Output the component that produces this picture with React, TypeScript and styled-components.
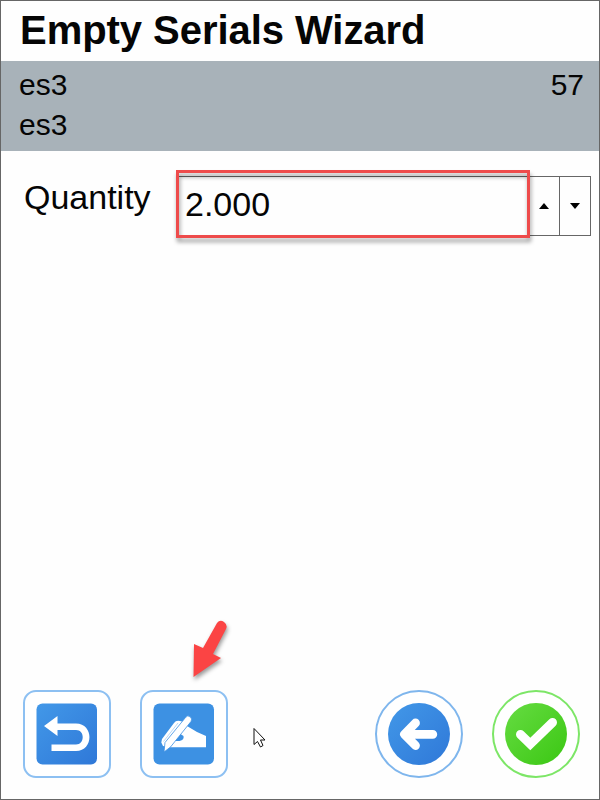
import React from "react";
import styled, { createGlobalStyle } from "styled-components";

const GlobalStyle = createGlobalStyle`
  * { box-sizing: border-box; }
  body { margin: 0; background: #fff; }
`;

const Screen = styled.main`
  position: relative;
  display: flex;
  flex-direction: column;
  width: 600px;
  height: 800px;
  overflow: hidden;
  border: 1px solid #666;
  background: #fefefe;
  color: #050505;
  font-family: "Liberation Sans", Arial, sans-serif;
`;

const Title = styled.h1`
  flex: none;
  height: 60px;
  margin: 0;
  padding-left: 19px;
  font-size: 40px;
  line-height: 58px;
  font-weight: 700;
  letter-spacing: -0.05px;
  white-space: nowrap;
`;

const Info = styled.section`
  flex: none;
  height: 90px;
  padding: 4px 15px 0 18px;
  background: #a8b2b9;
`;

const InfoLine = styled.div`
  display: flex;
  justify-content: space-between;
  height: 40px;
  font-size: 30px;
  line-height: 40px;
`;

const Field = styled.div`
  display: flex;
  flex: none;
  margin-top: 25px;
  padding: 0 8px 0 23px;
`;

const FieldName = styled.span`
  width: 152px;
  font-size: 34px;
  line-height: 42px;
`;

const Spinner = styled.div`
  position: relative;
  display: flex;
  flex: 1;
  height: 60px;
  border: 1px solid #666;
`;

const Value = styled.div`
  flex: 1;
  padding-left: 8px;
  font-size: 34px;
  line-height: 55px;
`;

const Step = styled.button<{ $divided?: boolean }>`
  display: flex;
  align-items: center;
  justify-content: center;
  width: 31px;
  padding: 0;
  border: 0;
  border-left: ${(p) => (p.$divided ? "1px solid #666" : "0")};
  background: none;
`;

const Highlight = styled.div`
  position: absolute;
  top: -7px;
  left: -1px;
  width: 354px;
  height: 68px;
  border: 3px solid #ee4b4b;
  filter: drop-shadow(1px 4px 2px rgba(0, 0, 0, 0.4));
`;

const Actions = styled.footer`
  display: flex;
  justify-content: space-between;
  margin-top: auto;
  padding: 0 19px 21px 22px;
`;

const Group = styled.div`
  display: flex;
  gap: 29px;
`;

const Action = styled.button<{ $round?: boolean; $ring: string }>`
  display: flex;
  align-items: center;
  justify-content: center;
  width: 88px;
  height: 88px;
  padding: 0;
  border: 2px solid ${(p) => p.$ring};
  border-radius: ${(p) => (p.$round ? "50%" : "13px")};
  background: #fff;
`;

const Pointer = styled.svg`
  position: absolute;
  top: 726px;
  left: 251px;
`;

const Callout = styled.svg`
  position: absolute;
  top: 609px;
  left: 179px;
  overflow: visible;
  filter: drop-shadow(1px 3px 2px rgba(0, 0, 0, 0.4));
`;

const Icon = ({ children }: { children: React.ReactNode }) => (
  <svg width="62" height="62" viewBox="0 0 62 62">
    <defs>
      <linearGradient id="blue" x1="0" y1="0" x2="1" y2="1">
        <stop offset="0" stopColor="#4298e8" />
        <stop offset="1" stopColor="#2f78d8" />
      </linearGradient>
      <linearGradient id="green" x1="0" y1="0" x2="1" y2="1">
        <stop offset="0" stopColor="#66dc42" />
        <stop offset="1" stopColor="#3bc713" />
      </linearGradient>
    </defs>
    {children}
  </svg>
);

export default function App() {
  return (
    <>
      <GlobalStyle />
      <Screen>
        <Title>Empty Serials Wizard</Title>
        <Info>
          <InfoLine><span>es3</span><span>57</span></InfoLine>
          <InfoLine><span>es3</span></InfoLine>
        </Info>
        <Field>
          <FieldName>Quantity</FieldName>
          <Spinner>
            <Value>2.000</Value>
            <Step aria-label="Increase">
              <svg width="10" height="6"><path d="M0 6 5 0l5 6z" /></svg>
            </Step>
            <Step $divided aria-label="Decrease">
              <svg width="10" height="6"><path d="M0 0h10L5 6z" /></svg>
            </Step>
            <Highlight />
          </Spinner>
        </Field>
        <Actions>
          <Group>
            <Action $ring="#8dc0f2" aria-label="Undo">
              <Icon>
                <rect x="0.5" y="0.5" width="60.5" height="61" rx="6" fill="url(#blue)" />
                <path d="M8 23 21.500 13V20.500H40C58 20.500 58 48 40 48H15.500V41.500H40C49 41.500 49 27 40 27H21.500V33Z" fill="#fff" />
              </Icon>
            </Action>
            <Action $ring="#8dc0f2" aria-label="Sign">
              <Icon>
                <rect x="0.5" y="0.5" width="60.5" height="61" rx="6" fill="#3d91e3" />
                <path d="M8.300 39.500 9 36 21 20q2-3 6-2l4 1 3 4 10 6 9 4V44.300H18L10 43Z" fill="#fff" />
                <path d="M21.500 38h5q5-1 4-5l-3-2Z" fill="#3d91e3" />
                <path d="M11 49 12 39.500 32.500 14.500q2-3 5-.5 2 2 .5 4.500L17.500 44Z" fill="#fff" stroke="#3d91e3" strokeWidth=".8" />
                <path d="M10.500 38.500 25 20" stroke="#a9cff3" strokeWidth=".8" />
              </Icon>
            </Action>
          </Group>
          <Group>
            <Action $round $ring="#7fb6ed" aria-label="Back">
              <Icon>
                <circle cx="31" cy="31" r="31" fill="url(#blue)" />
                <path d="M27.500 20 16.500 31.300 27.500 42.500M16.500 31.300H44.800" fill="none" stroke="#fff" strokeWidth="8.800" strokeLinecap="round" strokeLinejoin="round" />
              </Icon>
            </Action>
            <Action $round $ring="#7de667" aria-label="Confirm">
              <Icon>
                <circle cx="31" cy="31" r="31" fill="url(#green)" />
                <path d="M15.500 31.500 25.300 41 47.500 19.500" fill="none" stroke="#fff" strokeWidth="9" strokeLinecap="round" strokeLinejoin="miter" />
              </Icon>
            </Action>
          </Group>
        </Actions>
        <Callout width="60" height="75" aria-hidden="true">
          <path d="M13.500 67 14 34l9 4L37 13q3-4 7-1 4 3 2 7L33 44l8 4Z" fill="#fb4444" />
        </Callout>
        <Pointer width="14" height="22" aria-hidden="true">
          <path d="M2 1.500V17.500L5.500 14.500 8.500 20 11 18.500 8.500 13h4.500Z" fill="#fff" stroke="#111" />
        </Pointer>
      </Screen>
    </>
  );
}
